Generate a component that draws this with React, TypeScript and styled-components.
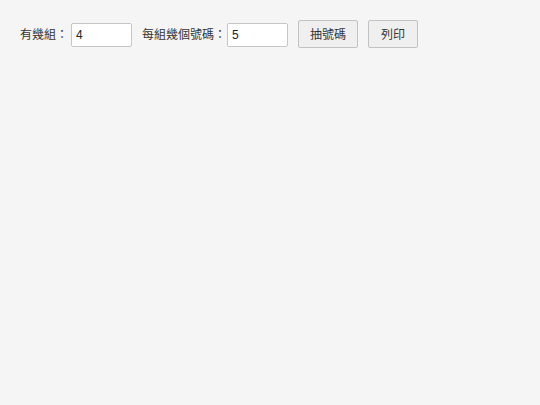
import React from "react";
import styled, { createGlobalStyle } from "styled-components";

const Global = createGlobalStyle`
  html, body {
    margin: 0;
    padding: 0;
    background: #f5f5f5;
  }
  body {
    font-family: "Noto Sans CJK TC", "Noto Sans", "Liberation Sans", sans-serif;
  }
`;

const Page = styled.div`
  min-height: 405px;
  padding: 20px 20px;
  box-sizing: border-box;
  background: #f5f5f5;
`;

const Toolbar = styled.div`
  display: flex;
  align-items: center;
  height: 28px;
`;

const Field = styled.label<{ $gap?: number }>`
  display: flex;
  align-items: center;
  gap: ${(p) => p.$gap ?? 2}px;
  margin-right: 10px;
`;

const LabelText = styled.span`
  font-size: 12px;
  color: #333;
  white-space: nowrap;
  line-height: 1;
`;

const NumberInput = styled.input`
  box-sizing: border-box;
  width: 61px;
  height: 24px;
  margin: 2px 0 0 0;
  padding: 0 4px;
  border: 1px solid #c6c6c6;
  border-radius: 2px;
  background: #fff;
  font-family: "Liberation Sans", Arial, sans-serif;
  font-size: 12px;
  color: #222;
  outline: none;
`;

const Button = styled.button`
  box-sizing: border-box;
  height: 28px;
  min-width: 50px;
  margin-right: 10px;
  padding: 0 11px;
  border: 1px solid #c2c2c2;
  border-radius: 2px;
  background: #efefef;
  color: #333;
  font-family: "Noto Sans CJK TC", sans-serif;
  font-size: 12px;
  line-height: 1;
  cursor: pointer;
`;

export default function App() {
  return (
    <Page>
      <Global />
      <Toolbar>
        <Field $gap={3}>
          <LabelText>有幾組：</LabelText>
          <NumberInput type="text" defaultValue="4" />
        </Field>
        <Field $gap={1}>
          <LabelText>每組幾個號碼：</LabelText>
          <NumberInput type="text" defaultValue="5" />
        </Field>
        <Button>抽號碼</Button>
        <Button>列印</Button>
      </Toolbar>
    </Page>
  );
}
